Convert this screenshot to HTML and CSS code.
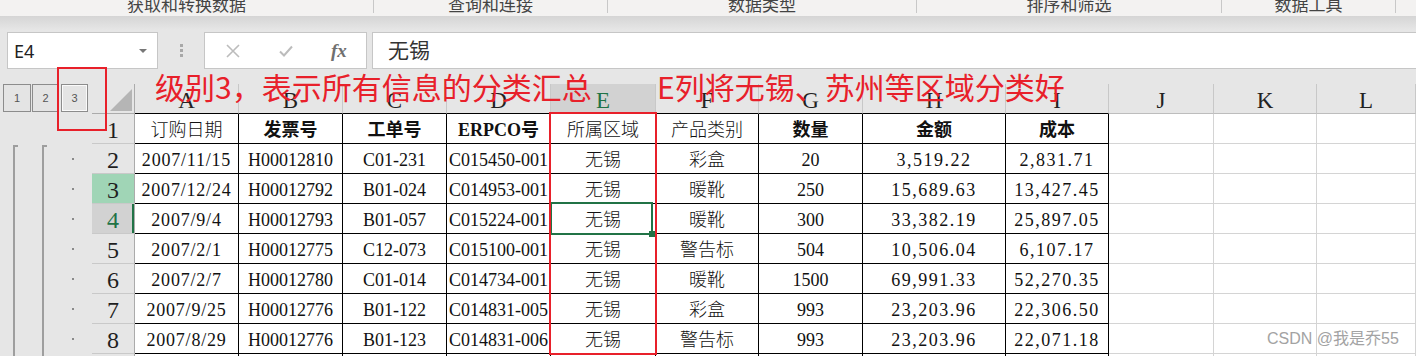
FILE: index.html
```html
<!doctype html>
<html>
<head>
<meta charset="utf-8">
<title>分类汇总</title>
<link rel="stylesheet" href="styles.css">
</head>
<body>
<div class="app">
	<div class="ribbon">
		<div class="grp g1"><span>获取和转换数据</span></div>
		<div class="grp g2"><span>查询和连接</span></div>
		<div class="grp g3"><span>数据类型</span></div>
		<div class="grp g4"><span>排序和筛选</span></div>
		<div class="grp g5"><span>数据工具</span></div>
		<div class="grp g6"></div>
	</div>
	<div class="shade"></div>

	<div class="fbar">
		<div class="namebox"><span>E4</span><i class="caret"></i></div>
		<div class="grip"><i></i><i></i><i></i></div>
		<div class="fbtns">
			<svg width="16" height="16" viewBox="0 0 16 16"><path d="M2 2L14 14M14 2L2 14" stroke="#bcbcbc" stroke-width="1.6" fill="none"/></svg>
			<svg width="16" height="16" viewBox="0 0 16 16"><path d="M2 8.5L6 12.5L14 3.5" stroke="#bcbcbc" stroke-width="2" fill="none"/></svg>
			<span class="fx">fx</span>
		</div>
		<div class="finput">无锡</div>
	</div>

	<div class="sheet">
		<div class="row hdr">
			<div class="gut lvls"><span class="lv">1</span><span class="lv">2</span><span class="lv on">3</span></div>
			<div class="corner"><i></i></div>
			<div class="hc">A</div><div class="hc">B</div><div class="hc">C</div><div class="hc">D</div>
			<div class="hc sel">E</div><div class="hc">F</div><div class="hc">G</div><div class="hc">H</div>
			<div class="hc">I</div><div class="hc x">J</div><div class="hc x">K</div><div class="hc x">L</div>
		</div>
		<div class="row">
			<div class="gut"></div>
			<div class="rh">1</div>
			<div class="c">订购日期</div><div class="c b">发票号</div><div class="c b">工单号</div><div class="c b">ERPCO号</div>
			<div class="c">所属区域</div><div class="c">产品类别</div><div class="c b">数量</div><div class="c b">金额</div><div class="c b">成本</div>
			<div class="e"></div><div class="e"></div><div class="e"></div>
		</div>
		<div class="row">
			<div class="gut"><i class="bar top"></i><i class="bar top"></i><i class="dot"></i></div>
			<div class="rh">2</div>
			<div class="c d">2007/11/15</div><div class="c">H00012810</div><div class="c">C01-231</div><div class="c">C015450-001</div>
			<div class="c">无锡</div><div class="c">彩盒</div><div class="c">20</div><div class="c n">3,519.22</div><div class="c n">2,831.71</div>
			<div class="e"></div><div class="e"></div><div class="e"></div>
		</div>
		<div class="row">
			<div class="gut"><i class="bar"></i><i class="bar"></i><i class="dot"></i></div>
			<div class="rh hl">3</div>
			<div class="c d">2007/12/24</div><div class="c">H00012792</div><div class="c">B01-024</div><div class="c">C014953-001</div>
			<div class="c">无锡</div><div class="c">暖靴</div><div class="c">250</div><div class="c n">15,689.63</div><div class="c n">13,427.45</div>
			<div class="e"></div><div class="e"></div><div class="e"></div>
		</div>
		<div class="row">
			<div class="gut"><i class="bar"></i><i class="bar"></i><i class="dot"></i></div>
			<div class="rh cur">4</div>
			<div class="c d">2007/9/4</div><div class="c">H00012793</div><div class="c">B01-057</div><div class="c">C015224-001</div>
			<div class="c">无锡</div><div class="c">暖靴</div><div class="c">300</div><div class="c n">33,382.19</div><div class="c n">25,897.05</div>
			<div class="e"></div><div class="e"></div><div class="e"></div>
		</div>
		<div class="row">
			<div class="gut"><i class="bar"></i><i class="bar"></i><i class="dot"></i></div>
			<div class="rh">5</div>
			<div class="c d">2007/2/1</div><div class="c">H00012775</div><div class="c">C12-073</div><div class="c">C015100-001</div>
			<div class="c">无锡</div><div class="c">警告标</div><div class="c">504</div><div class="c n">10,506.04</div><div class="c n">6,107.17</div>
			<div class="e"></div><div class="e"></div><div class="e"></div>
		</div>
		<div class="row">
			<div class="gut"><i class="bar"></i><i class="bar"></i><i class="dot"></i></div>
			<div class="rh">6</div>
			<div class="c d">2007/2/7</div><div class="c">H00012780</div><div class="c">C01-014</div><div class="c">C014734-001</div>
			<div class="c">无锡</div><div class="c">暖靴</div><div class="c">1500</div><div class="c n">69,991.33</div><div class="c n">52,270.35</div>
			<div class="e"></div><div class="e"></div><div class="e"></div>
		</div>
		<div class="row">
			<div class="gut"><i class="bar"></i><i class="bar"></i><i class="dot"></i></div>
			<div class="rh">7</div>
			<div class="c d">2007/9/25</div><div class="c">H00012776</div><div class="c">B01-122</div><div class="c">C014831-005</div>
			<div class="c">无锡</div><div class="c">彩盒</div><div class="c">993</div><div class="c n">23,203.96</div><div class="c n">22,306.50</div>
			<div class="e"></div><div class="e"></div><div class="e"></div>
		</div>
		<div class="row">
			<div class="gut"><i class="bar"></i><i class="bar"></i><i class="dot"></i></div>
			<div class="rh">8</div>
			<div class="c d">2007/8/29</div><div class="c">H00012776</div><div class="c">B01-123</div><div class="c">C014831-006</div>
			<div class="c">无锡</div><div class="c">警告标</div><div class="c">993</div><div class="c n">23,203.96</div><div class="c n">22,071.18</div>
			<div class="e"></div><div class="e"></div><div class="e"></div>
		</div>
		<div class="row">
			<div class="gut"><i class="bar"></i><i class="bar"></i><i class="dot"></i></div>
			<div class="rh">9</div>
			<div class="c"></div><div class="c"></div><div class="c"></div><div class="c"></div>
			<div class="c"></div><div class="c"></div><div class="c"></div><div class="c"></div><div class="c"></div>
			<div class="e"></div><div class="e"></div><div class="e"></div>
		</div>
	</div>

	<!-- 选中单元格和标注 -->
	<div class="selbox"><i class="handle"></i></div>
	<div class="mark mark-lvl"></div>
	<div class="mark mark-col"></div>
	<div class="note note1">级别3，表示所有信息的分类汇总</div>
	<div class="note note2">E列将无锡、苏州等区域分类好</div>
	<div class="wm">CSDN @我是乔55</div>
</div>
</body>
</html>
```
FILE: styles.css
```css
* { margin: 0; padding: 0; box-sizing: border-box; }
body { width: 1416px; height: 356px; overflow: hidden; background: #e6e6e6; font-family: "Noto Sans", "Noto Sans CJK SC", sans-serif; }
.app { position: relative; height: 356px; }

/* ribbon 底部分组名 */
.ribbon { display: flex; height: 16px; background: #f3f2f1; overflow: hidden; }
.ribbon .grp { height: 13px; border-right: 1px solid #c8c8c8; text-align: center; }
.ribbon .grp span { display: block; margin-top: -5px; font: 17px/17px "Noto Sans CJK SC", sans-serif; color: #444; }
.g1 { width: 374px; }
.g2 { width: 234px; }
.g3 { width: 309px; }
.g4 { width: 305px; }
.g5 { width: 174px; }
.ribbon .g6 { flex: 1; border-right: none; }
.shade { height: 14px; background: linear-gradient(#d5d5d5, #e6e6e6); }

/* 编辑栏 */
.fbar { display: flex; align-items: flex-start; height: 42px; padding: 2px 0 0 7px; }
.namebox { width: 151px; height: 37px; background: #fff; border: 1px solid #c6c6c6; display: flex; align-items: center; justify-content: space-between; padding: 0 10px 0 6px; font-size: 18px; color: #222; }
.caret { width: 0; height: 0; border-left: 4px solid transparent; border-right: 4px solid transparent; border-top: 4px solid #777; }
.grip { width: 46px; height: 37px; display: flex; flex-direction: column; align-items: center; justify-content: center; gap: 2px; }
.grip i { width: 3px; height: 3px; background: #a8a8a8; }
.fbtns { width: 163px; height: 37px; margin-right: 5px; background: #fff; border: 1px solid #c6c6c6; display: flex; align-items: center; padding-left: 20px; gap: 37px; }
.fbtns .fx { width: 17px; font: italic bold 19px/20px "Liberation Serif", serif; color: #707070; }
.finput { flex: 1; height: 37px; background: #fff; border: 1px solid #c6c6c6; border-right: none; padding-left: 15px; font: 21px/32px "Noto Sans CJK SC", sans-serif; color: #333; }

/* 表格 */
.sheet { padding-top: 12px; }
.row { display: grid; grid-template-columns: 92px 43px 104px 104px 104px 104px 105px 103px 104px 143px 103px 105px 103px 1fr; height: 30px; }
.row > div { overflow: hidden; white-space: nowrap; }

.gut { display: flex; padding-left: 13px; }
.gut .bar { width: 5px; border-left: 2px solid #9e9e9e; }
.gut .bar + .bar { margin-left: 24px; }
.gut .bar.top { margin-top: 1px; border-top: 2px solid #9e9e9e; }
.gut .dot { margin-left: 25px; align-self: center; width: 2px; height: 2px; background: #8a8a8a; }

.lvls { padding: 0 0 2px 3px; gap: 1px; }
.lv { width: 28px; border: 1px solid #8c8c8c; background: #e4e4e4; display: flex; align-items: center; justify-content: center; font: 11px "Liberation Sans", sans-serif; color: #555; }
.lv + .lv { width: 27px; }
.lv.on { margin-left: 1px; box-shadow: inset 0 0 0 1px #fafafa; }

.corner { display: flex; justify-content: flex-end; align-items: flex-end; padding: 0 2px 2px 0; border-right: 1px solid #ababab; border-bottom: 1px solid #ababab; }
.corner i { width: 0; height: 0; border-left: 22px solid transparent; border-bottom: 22px solid #b5b5b5; }

.hc { text-align: center; border-right: 1px solid #c8c8c8; border-bottom: 1px solid #000; font: 23px/29px "Liberation Serif", serif; padding-top: 2px; color: #222; }
.hc.x { border-bottom-color: #bdbdbd; }
.hc.sel { background: #d2d2d2; color: #217346; }

.rh { text-align: center; border-right: 1px solid #ababab; border-bottom: 1px solid #c9c9c9; font: 24px/29px "Liberation Serif", serif; padding-top: 2px; color: #1f1f1f; }
.rh.hl { background: #a0d5b6; }
.rh.cur { background: #d2d2d2; color: #217346; box-shadow: inset -2px 0 0 #217346; }

.c { background: #fff; text-align: center; border-right: 1px solid #000; border-bottom: 1px solid #000; font: 300 18px/29px "Liberation Serif", "Noto Sans CJK SC", serif; padding-top: 2px; color: #111; }
.c.b { font-weight: 700; }
.c.d { letter-spacing: 0.8px; }
.c.n { letter-spacing: 1.5px; }
.e { background: #fff; border-right: 1px solid #d4d4d4; border-bottom: 1px solid #d4d4d4; }

/* 覆盖在表格上的选区与标注 */
.selbox { position: absolute; left: 550px; top: 202px; width: 103px; height: 33px; border: 2px solid #217346; }
.selbox .handle { position: absolute; right: -4px; bottom: -4px; width: 6px; height: 6px; background: #217346; }
.mark { position: absolute; border: 2px solid #e8202a; }
.mark-lvl { left: 57px; top: 67px; width: 50px; height: 64px; }
.mark-col { left: 549px; top: 112px; width: 108px; height: 243px; }
.note { position: absolute; top: 71px; font: 30px/30px "Noto Sans CJK SC", sans-serif; color: #e8202a; white-space: nowrap; }
.note1 { left: 155px; }
.note2 { left: 657px; }
.wm { position: absolute; left: 1267px; top: 331px; font: 16px/16px "Liberation Sans", "Noto Sans CJK SC", sans-serif; color: #a3a3a3; }
```
